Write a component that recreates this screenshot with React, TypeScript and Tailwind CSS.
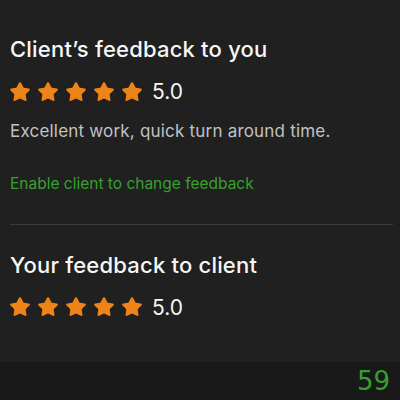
import { Star } from 'lucide-react';

const font = { fontFamily: 'Inter, "Liberation Sans", Arial, sans-serif' };

const Stars = ({ value }: { value: string }) => (
  <div className="flex items-center">
    <div className="flex gap-[6px]">
      {[0, 1, 2, 3, 4].map((i) => (
        <Star key={i} size={22} className="text-[#ee8417]" fill="#ee8417" strokeWidth={1.5} strokeLinejoin="round" />
      ))}
    </div>
    <span className="ml-[9px] text-[21px] text-[#f4f4f4]">{value}</span>
  </div>
);

export default function App() {
  return (
    <div className="w-[400px] h-[400px] bg-[#202020] flex flex-col overflow-hidden" style={font}>
      <div className="flex-1 px-[10px]">
        <h2 className="mt-[35px] text-[22px] font-medium tracking-[0.2px] text-[#f6f6f6] leading-[28px]">Client’s feedback to you</h2>
        <div className="mt-[13px] -ml-[1px]">
          <Stars value="5.0" />
        </div>
        <p className="mt-[12px] text-[17px] tracking-[0.2px] text-[#c2c2c2] leading-[22px]">Excellent work, quick turn around time.</p>
        <p className="mt-[32px] text-[15.5px] text-[#37a12f] leading-[20px]">Enable client to change feedback</p>
        <div className="mt-[30px] h-px bg-[#3a3a3a] mr-[-3px]" />
        <h2 className="mt-[26px] text-[22px] font-medium tracking-[0.2px] text-[#f6f6f6] leading-[28px]">Your feedback to client</h2>
        <div className="mt-[13px] -ml-[1px]">
          <Stars value="5.0" />
        </div>
      </div>
      <div className="h-[38px] bg-[#191919] flex items-center justify-end pr-[10px]">
        <span className="text-[26px] text-[#36a02e] leading-none" style={{ fontFamily: '"DejaVu Sans", sans-serif' }}>59</span>
      </div>
    </div>
  );
}
